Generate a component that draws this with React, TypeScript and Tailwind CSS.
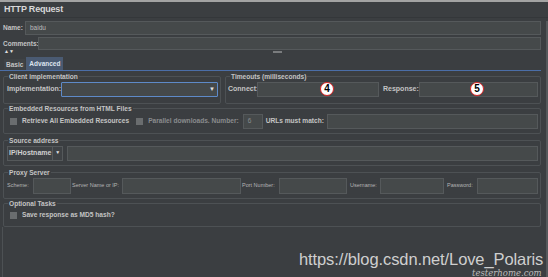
import React from 'react';

const font = { fontFamily: '"Liberation Sans", Arial, sans-serif' };

const Input = ({ className = '', children }: { className?: string; children?: React.ReactNode }) => (
  <div className={`h-[15px] bg-[#45494a] border border-[#55595b] flex items-center px-1 ${className}`}>{children}</div>
);

const Check = ({ label, dim }: { label: string; dim?: boolean }) => (
  <div className="flex items-center gap-[5px] whitespace-nowrap">
    <span className="w-[7px] h-[7px] bg-[#6a6d6f] inline-block" />
    <span className={`text-[6.6px] font-bold ${dim ? 'text-[#8a8c8e]' : 'text-[#c4c4c4]'}`}>{label}</span>
  </div>
);

const Badge = ({ n }: { n: string }) => (
  <span className="absolute top-1/2 -translate-y-1/2 w-[14px] h-[14px] rounded-full bg-white border-[1.5px] border-[#d22] text-black text-[10px] font-bold flex items-center justify-center leading-none">
    {n}
  </span>
);

const Box = ({ title, className = '', children }: { title: string; className?: string; children: React.ReactNode }) => (
  <fieldset className={`border border-[#4d5154] rounded-[2px] px-[2px] ${className}`}>
    <legend className="text-[6.6px] font-bold text-[#c4c4c4] px-[1px] ml-[2px] whitespace-nowrap">{title}</legend>
    {children}
  </fieldset>
);

export default function App() {
  return (
    <div style={font} className="w-[548px] h-[277px] bg-[#3b3e41] border-t-2 border-[#a3a3a3] relative overflow-hidden text-[#c4c4c4] whitespace-nowrap">
      <div className="h-[16px] flex items-center px-[4px] border-b border-[#34373a]">
        <span className="text-[9px] font-bold text-[#d8d8d8] tracking-[-0.2px]">HTTP Request</span>
      </div>
      <div className="pr-[5px] border-r-2 border-[#55585b]">
        <div className="flex items-center mt-[3px] pl-[3px]">
          <span className="text-[6.5px] font-bold w-[22px]">Name:</span>
          <Input className="flex-1 !h-[14px]">
            <span className="text-[6.5px] text-[#bcbcbc]">baidu</span>
          </Input>
        </div>
        <div className="flex items-center mt-[2px] pl-[3px]">
          <span className="text-[6.5px] font-bold w-[35px]">Comments:</span>
          <Input className="flex-1 !h-[13px]" />
        </div>
        <div className="relative h-[5px]">
          <span className="absolute left-[4px] -top-[1px] text-[5px] leading-none text-[#e0e0e0]">▲▼</span>
          <span className="absolute left-[273px] top-[1px] w-[9px] h-[2px] bg-[#7a7c7e]" />
        </div>
        <div className="flex items-end h-[13px] mt-[2px] pl-[4px]">
          <span className="text-[6.5px] font-bold px-[2px] h-[11px] flex items-center bg-[#3f4245]">Basic</span>
          <span className="text-[6.5px] font-bold px-[3px] h-[13px] flex items-center bg-[#4a5a72] text-[#dde4ee] ml-[1px]">Advanced</span>
        </div>
        <div className="border-t border-[#4b6ea8] pl-[3px] pt-[1px]">
          <div className="flex gap-[4px]">
            <Box title="Client implementation" className="w-[218px] pb-[6px]">
              <div className="flex items-center gap-[2px] pl-[1px]">
                <span className="text-[7px] font-bold w-[52px]">Implementation:</span>
                <div className="flex-1 h-[15px] bg-[#45494a] border border-[#5e8ac8] rounded-[1px] flex justify-end items-center pr-[2px]">
                  <span className="text-[6px] text-[#e0e0e0]">▼</span>
                </div>
              </div>
            </Box>
            <Box title="Timeouts (milliseconds)" className="flex-1 pb-[6px]">
              <div className="flex items-center gap-[3px]">
                <span className="text-[7px] font-bold w-[26px]">Connect:</span>
                <Input className="w-[122px] relative">
                  <span className="absolute left-[62px]"><Badge n="4" /></span>
                </Input>
                <span className="text-[7px] font-bold w-[33px] ml-[1px]">Response:</span>
                <Input className="flex-1 relative">
                  <span className="absolute left-[50px]"><Badge n="5" /></span>
                </Input>
              </div>
            </Box>
          </div>
          <Box title="Embedded Resources from HTML Files" className="pb-[4px]">
            <div className="flex items-center pl-[4px]">
              <Check label="Retrieve All Embedded Resources" />
              <div className="ml-[7px]"><Check label="Parallel downloads. Number:" dim /></div>
              <Input className="w-[20px] ml-[4px] shrink-0">
                <span className="text-[6.5px] text-[#8a8c8e]">6</span>
              </Input>
              <span className="text-[6.6px] font-bold ml-[3px] w-[61px] shrink-0">URLs must match:</span>
              <Input className="flex-1" />
            </div>
          </Box>
          <Box title="Source address" className="mt-[2px] pb-[4px]">
            <div className="flex items-center gap-[4px] pl-[1px]">
              <div className="h-[15px] w-[56px] border border-[#55595b] bg-[#3f4245] flex items-center">
                <span className="text-[7px] font-bold px-[1px] flex-1 text-[#d0d0d0]">IP/Hostname</span>
                <span className="border-l border-[#55595b] h-full w-[10px] flex items-center justify-center text-[5px] text-[#e0e0e0]">▼</span>
              </div>
              <Input className="flex-1" />
            </div>
          </Box>
          <Box title="Proxy Server" className="mt-[2px] pb-[4px]">
            <div className="flex items-center text-[5.5px] text-[#b4b4b4] pl-[1px]">
              <span className="w-[26px]">Scheme:</span>
              <Input className="w-[38px] !h-[16px]" />
              <span className="w-[51px] pl-[1px]">Server Name or IP:</span>
              <Input className="w-[119px] !h-[16px]" />
              <span className="w-[38px] pl-[1px]">Port Number:</span>
              <Input className="w-[68px] !h-[16px]" />
              <span className="w-[33px] pl-[3px]">Username:</span>
              <Input className="w-[64px] !h-[16px]" />
              <span className="w-[33px] pl-[3px]">Password:</span>
              <Input className="flex-1 !h-[16px]" />
            </div>
          </Box>
          <Box title="Optional Tasks" className="pb-[6px]">
            <div className="pl-[4px] pt-[2px]">
              <Check label="Save response as MD5 hash?" />
            </div>
          </Box>
          <div className="h-[60px] border-l border-[#4d5154] -ml-[1px]" />
        </div>
      </div>
      <div className="absolute left-[299px] top-[245px] text-[16.5px] text-[#cfcfcf] tracking-[-0.1px]">
        https://blog.csdn.net/Love_Polaris
      </div>
      <div className="absolute left-[472px] top-[267px] text-[8.5px] leading-none italic text-[#bdbdbd]" style={{ fontFamily: '"DejaVu Serif", serif' }}>
        testerhome.com
      </div>
    </div>
  );
}
